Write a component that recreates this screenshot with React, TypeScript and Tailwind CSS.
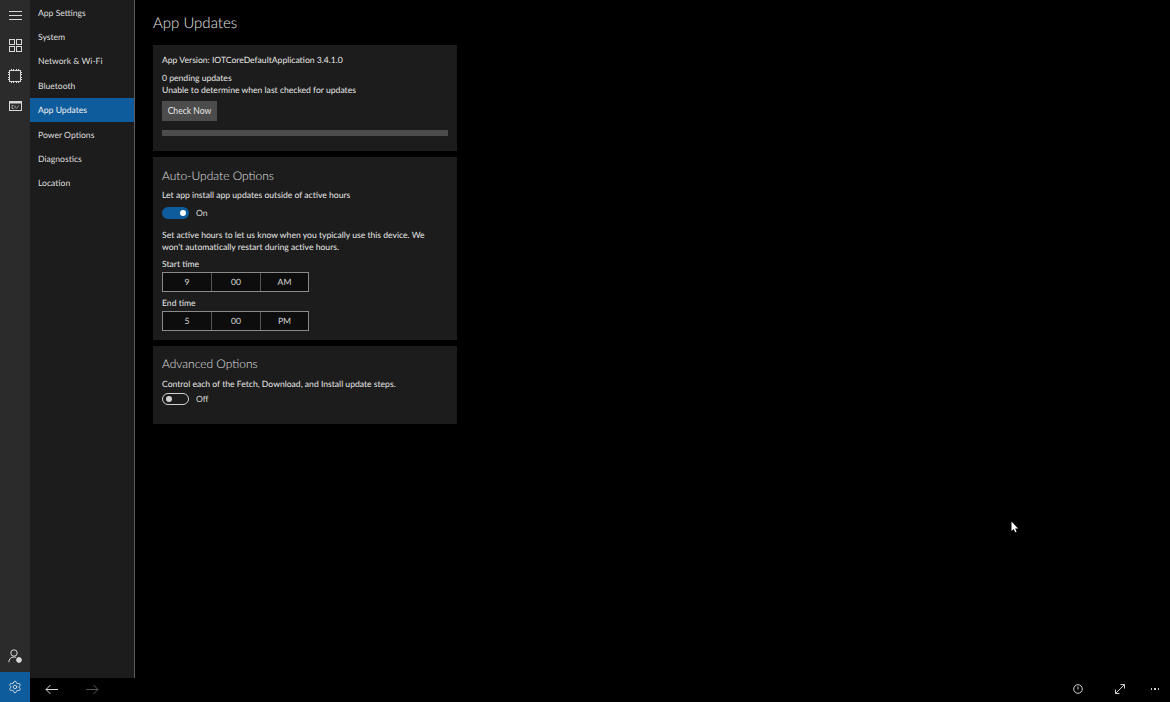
import { Settings } from "lucide-react";

const navItems = ["App Settings", "System", "Network & Wi-Fi", "Bluetooth", "App Updates", "Power Options", "Diagnostics", "Location"];

function Toggle({ on }: { on: boolean }) {
  return (
    <div className="flex h-[14px] items-center gap-[7px]">
      {on ? (
        <div className="flex h-[12px] w-[27px] items-center justify-end rounded-full bg-[#0f5c9c] pr-[3px]">
          <div className="h-[6px] w-[6px] rounded-full bg-white" />
        </div>
      ) : (
        <div className="flex h-[12px] w-[27px] items-center rounded-full border border-[#d0d0d0] pl-[3px]">
          <div className="h-[6px] w-[6px] rounded-full bg-[#d0d0d0]" />
        </div>
      )}
      <span className="text-[#d8d8d8]">{on ? "On" : "Off"}</span>
    </div>
  );
}

function TimePicker({ hour, period }: { hour: string; period: string }) {
  return (
    <div className="flex h-[20px] w-[147px] border border-[#8a8a8a] bg-[#0d0d0d] text-[#d8d8d8]">
      <div className="flex w-[49px] items-center justify-center border-r border-[#555]">{hour}</div>
      <div className="flex w-[49px] items-center justify-center border-r border-[#555]">00</div>
      <div className="flex flex-1 items-center justify-center">{period}</div>
    </div>
  );
}

export default function App() {
  return (
    <div className="relative flex h-[702px] w-[1170px] overflow-hidden bg-black text-[8.6px] leading-[12px] text-[#e6e6e6] [font-family:Lato,sans-serif] [text-rendering:geometricPrecision]">
      {/* left icon rail */}
      <div className="flex w-[30px] flex-col">
        <div className="flex flex-1 flex-col items-center justify-between bg-[#2b2b2b]">
          <div className="flex flex-col items-center text-[#d8d8d8]">
            <svg className="mt-[11px]" width="13" height="9" viewBox="0 0 13 9" stroke="currentColor">
              <path d="M0 0.5h13M0 4.5h13M0 8.5h13" />
            </svg>
            <svg className="mt-[19px]" width="13" height="13" viewBox="0 0 13 13" fill="none" stroke="currentColor">
              <rect x="0.5" y="0.5" width="5" height="5" />
              <rect x="7.5" y="0.5" width="5" height="5" />
              <rect x="0.5" y="7.5" width="5" height="5" />
              <rect x="7.5" y="7.5" width="5" height="5" />
            </svg>
            <svg className="mt-[17px]" width="14" height="14" viewBox="0 0 14 14" fill="none" stroke="currentColor">
              <rect x="1.5" y="1.5" width="11" height="11" />
              <path d="M3.5 0v1M5.5 0v1M8.5 0v1M10.5 0v1M3.5 13v1M5.5 13v1M8.5 13v1M10.5 13v1M0 3.5h1M0 5.5h1M0 8.5h1M0 10.5h1M13 3.5h1M13 5.5h1M13 8.5h1M13 10.5h1" />
            </svg>
            <svg className="mt-[18px]" width="13" height="10" viewBox="0 0 13 10" fill="none">
              <rect x="0.5" y="0.5" width="12" height="9" stroke="#d8d8d8" />
              <rect x="0.5" y="0.5" width="12" height="2" fill="#d8d8d8" />
              <path d="M4.5 4.5H3v3h1.5M6 4.5v3M7.5 7.5l2-3" stroke="#d8d8d8" strokeWidth="0.7" />
            </svg>
          </div>
          <div className="pb-[9px] text-[#d8d8d8]">
            <svg width="14" height="14" viewBox="0 0 14 14" fill="none" stroke="currentColor">
              <circle cx="6" cy="4" r="3.2" />
              <path d="M0.8 13.2c0-3 2.2-5.2 5.2-5.2 0.8 0 1.5 0.2 2.2 0.4" />
              <circle cx="11" cy="11" r="2.4" fill="currentColor" />
            </svg>
          </div>
        </div>
        <div className="flex h-[30px] items-center justify-center bg-[#0f5c9c] text-[#e8e8e8]">
          <Settings className="h-[14px] w-[14px]" strokeWidth={1.4} />
        </div>
      </div>

      <div className="flex flex-1 flex-col">
        <div className="flex flex-1">
          {/* settings nav */}
          <div className="w-[105px] border-r border-[#5a5a5a] bg-[#1c1c1c] pt-[0.5px]">
            {navItems.map((item) => (
              <div
                key={item}
                className={`flex h-[24.4px] items-center pl-[8px] text-[#dcdcdc] ${item === "App Updates" ? "bg-[#0f5c9c] text-[#f0f0f0]" : ""}`}
              >
                {item}
              </div>
            ))}
          </div>

          {/* content column */}
          <div className="w-[304px] pl-[18px] box-content">
            <h1 className="pt-[13px] text-[15px] leading-[21px] font-light text-[#e6e6e6]">App Updates</h1>

            <div className="mt-[11px] h-[106px] bg-[#1c1c1c] px-[9px] pt-[9px]">
              <div>App Version: IOTCoreDefaultApplication 3.4.1.0</div>
              <div className="mt-[6px]">0 pending updates</div>
              <div>Unable to determine when last checked for updates</div>
              <button className="mt-[5px] flex h-[20px] w-[55px] items-center justify-center bg-[#4c4c4c] text-[#e6e6e6]">Check Now</button>
              <div className="mt-[9px] h-[6px] w-[286px] bg-[#4c4c4c]" />
            </div>

            <div className="mt-[6px] h-[183px] bg-[#1c1c1c] px-[9px] pt-[11px]">
              <h2 className="text-[12px] leading-[16px] font-light text-[#e0e0e0]">Auto-Update Options</h2>
              <div className="mt-[5px]">Let app install app updates outside of active hours</div>
              <div className="mt-[5px]"><Toggle on /></div>
              <div className="mt-[9px] w-[270px]">Set active hours to let us know when you typically use this device. We won't automatically restart during active hours.</div>
              <div className="mt-[5px]">Start time</div>
              <div className="mt-[2px]"><TimePicker hour="9" period="AM" /></div>
              <div className="mt-[5px]">End time</div>
              <div className="mt-[2px]"><TimePicker hour="5" period="PM" /></div>
            </div>

            <div className="mt-[6px] h-[78px] bg-[#1c1c1c] px-[9px] pt-[10px]">
              <h2 className="text-[12px] leading-[16px] font-light text-[#e0e0e0]">Advanced Options</h2>
              <div className="mt-[6px]">Control each of the Fetch, Download, and Install update steps.</div>
              <div className="mt-[2px]"><Toggle on={false} /></div>
            </div>
          </div>
        </div>

        {/* bottom bar */}
        <div className="flex h-[24px] items-center justify-between pl-[15px] pr-[11px]">
          <div className="flex items-center gap-[28px] pb-[2px]">
            <svg width="13" height="11" viewBox="0 0 13 11" fill="none" stroke="#d8d8d8">
              <path d="M13 5.5H1M5.5 1L1 5.5L5.5 10" />
            </svg>
            <svg width="13" height="11" viewBox="0 0 13 11" fill="none" stroke="#555">
              <path d="M0 5.5h12M7.5 1L12 5.5L7.5 10" />
            </svg>
          </div>
          <div className="flex items-center pb-[2px] text-[#cfcfcf]">
            <svg width="10" height="10" viewBox="0 0 10 10" fill="none" stroke="currentColor">
              <circle cx="5" cy="5" r="4.3" />
              <path d="M5 2.5v3" />
            </svg>
            <svg className="ml-[32px]" width="10" height="10" viewBox="0 0 10 10" fill="none" stroke="currentColor">
              <path d="M0.5 9.5l9-9M5.5 0.5h4v4M0.5 5.5v4h4" />
            </svg>
            <div className="ml-[26px] flex gap-[2px]">
              <div className="h-[1.5px] w-[1.5px] bg-[#cfcfcf]" />
              <div className="h-[1.5px] w-[1.5px] bg-[#cfcfcf]" />
              <div className="h-[1.5px] w-[1.5px] bg-[#cfcfcf]" />
            </div>
          </div>
        </div>
      </div>

      {/* mouse pointer */}
      <svg className="absolute left-[1011px] top-[521px]" width="8" height="12" viewBox="0 0 8 12">
        <path d="M0.5 0.5v9.5l2.2-2 1.5 3.3 1.4-0.6-1.5-3.2h3z" fill="#fff" />
      </svg>
    </div>
  );
}
